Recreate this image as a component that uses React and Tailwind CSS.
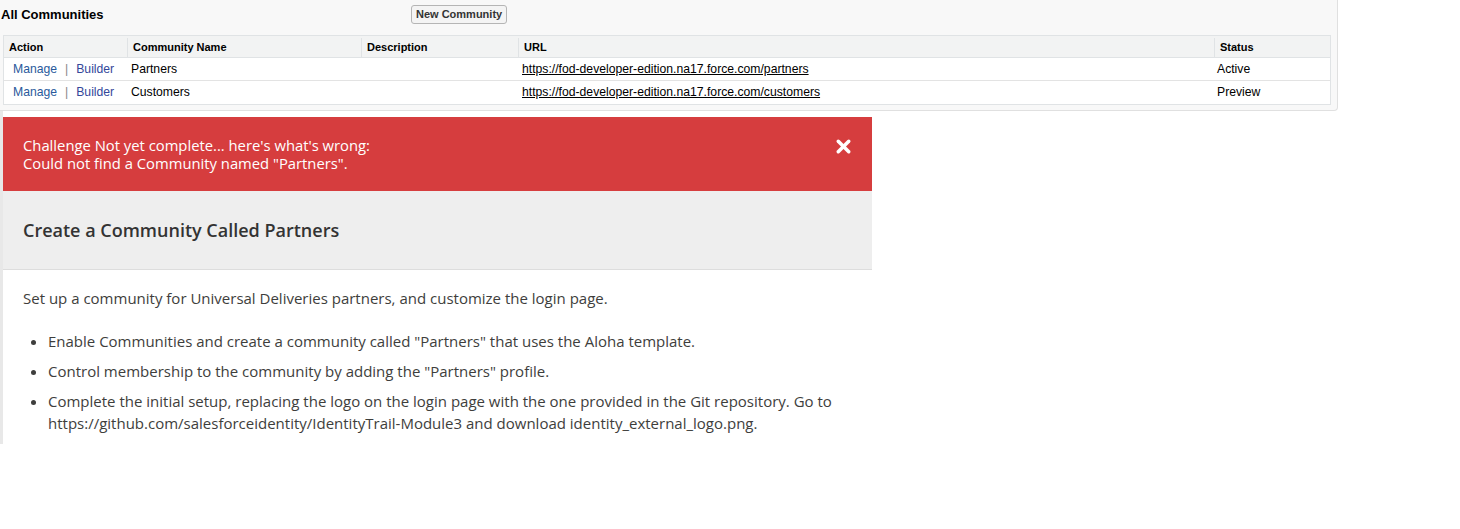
import React from "react";
import { X } from "lucide-react";

const rows = [
  { name: "Partners", url: "https://fod-developer-edition.na17.force.com/partners", status: "Active" },
  { name: "Customers", url: "https://fod-developer-edition.na17.force.com/customers", status: "Preview" },
];

const bullets = [
  'Enable Communities and create a community called "Partners" that uses the Aloha template.',
  'Control membership to the community by adding the "Partners" profile.',
  "Complete the initial setup, replacing the logo on the login page with the one provided in the Git repository. Go to https://github.com/salesforceidentity/IdentityTrail-Module3 and download identity_external_logo.png.",
];

export default function App() {
  return (
    <div className="w-[1460px] h-[529px] bg-white overflow-hidden">
      {/* Classic setup panel */}
      <div className="w-[1338px] h-[111px] bg-[#f8f8f8] border-r border-b border-[#e0e0e0] rounded-br-[4px] font-['Liberation_Sans',Arial,sans-serif]">
        <div className="flex items-center h-[29px] pl-[1px]">
          <h2 className="w-[410px] text-[13px] font-bold text-black">All Communities</h2>
          <button className="h-[19px] px-[4px] text-[11px] font-bold text-[#333] bg-[#f4f4f4] border border-[#b5b5b5] rounded-[3px] leading-none">
            New Community
          </button>
        </div>
        <div className="ml-[3px] mt-[6px] w-[1328px] border border-[#e0e3e5] bg-white">
          <div className="flex h-[22px] pt-[2px] bg-[#f2f3f3] border-b border-[#e0e3e5] text-[11px] font-bold text-black items-center">
            <div className="w-[123px] pl-[5px]">Action</div>
            <div className="w-[234px] pl-[5px] h-full flex items-center border-l border-[#e0e3e5]">Community Name</div>
            <div className="w-[157px] pl-[5px] h-full flex items-center border-l border-[#e0e3e5]">Description</div>
            <div className="w-[696px] pl-[5px] h-full flex items-center border-l border-[#e0e3e5]">URL</div>
            <div className="flex-1 pl-[5px] h-full flex items-center border-l border-[#e0e3e5]">Status</div>
          </div>
          {rows.map((r, i) => (
            <div
              key={r.name}
              className={`flex h-[23px] items-center text-[12.2px] text-black ${i === 0 ? "border-b border-[#e3e3e3]" : ""}`}
            >
              <div className="w-[124px] pl-[9px] flex items-center">
                <span className="text-[#2a5a9c]">Manage</span>
                <span className="text-[#888] mx-[8px]">|</span>
                <span className="text-[#34479a]">Builder</span>
              </div>
              <div className="w-[234px] pl-[3px]">{r.name}</div>
              <div className="w-[157px]" />
              <div className="w-[696px] pl-[3px]">
                <span className="underline">{r.url}</span>
              </div>
              <div className="flex-1 pl-[2px]">{r.status}</div>
            </div>
          ))}
        </div>
      </div>

      {/* Trailhead challenge card */}
      <div className="flex h-[333px]">
        <div className="w-[3px] bg-[#e8e8e8]" />
        <div className="w-[869px] mt-[6px] font-['Open_Sans','Noto_Sans',sans-serif]">
          <div className="h-[74px] bg-[#d63d3e] flex justify-between pl-[20px] pr-[18px] pt-[19px] text-white">
            <p className="text-[14.8px] leading-[18px]">
              Challenge Not yet complete... here's what's wrong:
              <br />
              Could not find a Community named "Partners".
            </p>
            <X className="w-[21px] h-[21px]" strokeWidth={4} />
          </div>
          <div className="h-[79px] bg-[#eeeeee] border-b border-[#dddddd] flex items-center pl-[20px]">
            <h3 className="text-[18px] font-semibold text-[#333333] mt-[1px]">Create a Community Called Partners</h3>
          </div>
          <div className="bg-white pl-[20px] pr-[20px] pt-[17px] text-[15px] text-[#3e3e3c]">
            <p className="leading-[22px]">
              Set up a community for Universal Deliveries partners, and customize the login page.
            </p>
            <ul className="mt-[21px] pl-[25px] list-disc flex flex-col gap-[8px]">
              {bullets.map((b) => (
                <li key={b} className="leading-[22px]">
                  {b}
                </li>
              ))}
            </ul>
          </div>
        </div>
      </div>
    </div>
  );
}
